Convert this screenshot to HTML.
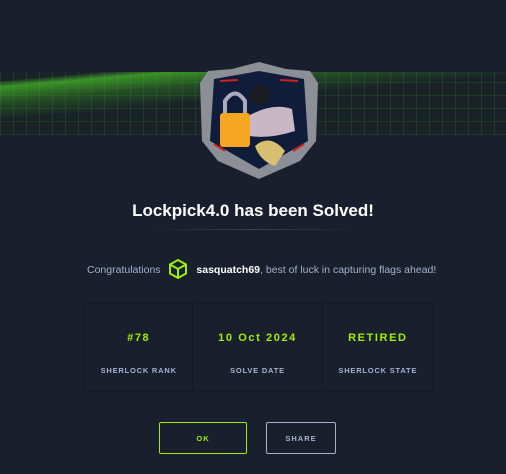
<!DOCTYPE html>
<html><head><style>
body{margin:0;width:506px;height:474px;background:#1a1f2d;font-family:"Liberation Sans",sans-serif;position:relative;overflow:hidden}
.band{position:absolute;left:0;top:72px;width:506px;height:63px;background:
linear-gradient(175deg,transparent 0 8%,rgba(80,220,40,.6) 14%,rgba(60,180,30,.3) 28%,transparent 45%),
repeating-linear-gradient(90deg,rgba(40,120,40,.3) 0 1px,transparent 1px 13px),
repeating-linear-gradient(0deg,rgba(40,120,40,.25) 0 1px,transparent 1px 13px),#1a2228}
.badge{position:absolute;left:200px;top:61px;width:118px;height:118px}
h1{position:absolute;top:201px;left:0;width:506px;text-align:center;margin:0;color:#fff;font-size:17px;font-weight:bold}
.line{position:absolute;top:229px;left:150px;width:206px;height:1px;background:linear-gradient(90deg,transparent,#3a4258,transparent)}
.cg{position:absolute;top:258px;left:87px;font-size:10.5px;color:#a4b1cd;white-space:nowrap}
.cg b{color:#fff}
.tbl{position:absolute;left:84px;top:302px;width:350px;height:89px;border:1px solid #141824;display:flex;box-sizing:border-box}
.c{border-right:1px solid #141824;text-align:center;box-sizing:border-box}
.c:last-child{border:none}
.v{color:#9fef00;font-weight:bold;font-size:11px;letter-spacing:1.6px;margin-top:29px}
.l{color:#a4b1cd;font-weight:bold;font-size:7.5px;letter-spacing:.8px;margin-top:22px}
.btn{position:absolute;top:422px;height:32px;box-sizing:border-box;border-radius:2px;font-size:7.5px;font-weight:bold;letter-spacing:1px;display:flex;align-items:center;justify-content:center}
</style></head><body>
<div class="band"></div>
<svg class="badge" viewBox="0 0 118 118">
<path d="M59 1 L86 8 L110 10 L118 22 L116 80 L100 100 L59 118 L18 100 L2 80 L0 22 L8 10 L32 8 Z" fill="#8c8f95"/>
<path d="M59 10 L104 18 L108 80 L59 108 L10 80 L14 18 Z" fill="#0f1c3a"/>
<path d="M20 20 L38 19 M80 19 L98 20 M14 83 L25 90 M104 83 L93 90" stroke="#d02020" stroke-width="2"/>
<circle cx="60" cy="34" r="10" fill="#1b1b22"/>
<path d="M40 60 Q70 40 92 48 L95 70 Q70 78 50 75Z" fill="#c9b8c4"/>
<rect x="20" y="52" width="30" height="34" rx="3" fill="#f5a623"/>
<path d="M25 52 V40 Q35 25 45 40 V52" stroke="#aab" stroke-width="4" fill="none"/>
<path d="M55 85 Q70 72 85 90 L75 105 Q60 100 55 85Z" fill="#d8c070"/>
</svg>
<h1>Lockpick4.0 has been Solved!</h1>
<div class="line"></div>
<div class="cg">Congratulations <svg width="22" height="22" viewBox="0 0 22 22" style="vertical-align:-7px;margin:0 4px"><path d="M11 2 L19 6.5 V15.5 L11 20 L3 15.5 V6.5 Z M3 6.5 L11 11 L19 6.5 M11 11 V20" fill="none" stroke="#9fef00" stroke-width="2"/></svg> <b>sasquatch69</b>, best of luck in capturing flags ahead!</div>
<div class="tbl">
<div class="c" style="width:109px"><div class="v">#78</div><div class="l">SHERLOCK RANK</div></div>
<div class="c" style="width:130px"><div class="v">10 Oct 2024</div><div class="l">SOLVE DATE</div></div>
<div class="c" style="width:111px"><div class="v">RETIRED</div><div class="l">SHERLOCK STATE</div></div>
</div>
<div class="btn" style="left:159px;width:88px;border:1px solid #9fef00;color:#9fef00">OK</div>
<div class="btn" style="left:266px;width:70px;border:1px solid #a4b1cd;color:#a4b1cd">SHARE</div>
</body></html>
